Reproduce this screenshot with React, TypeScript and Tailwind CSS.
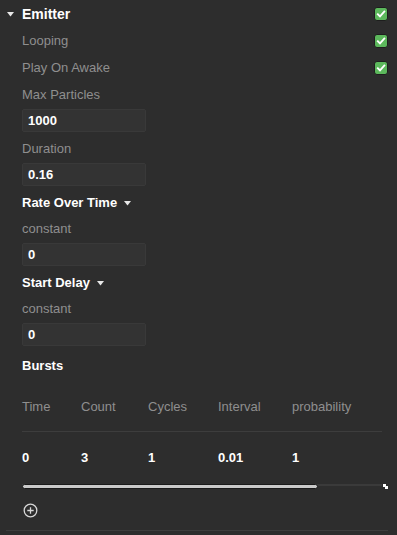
import React from 'react';

const Check = () => (
  <div className="w-[14px] h-[14px] rounded-[3px] bg-[#5cb85c] border border-[#1e1e1e] flex items-center justify-center">
    <svg width="10" height="10" viewBox="0 0 10 10">
      <path d="M1.8 5.2 L4 7.4 L8.3 2.6" fill="none" stroke="#fff" strokeWidth="1.8" strokeLinecap="square" />
    </svg>
  </div>
);

const Caret = ({ className }: { className?: string }) => (
  <svg width="7" height="5" viewBox="0 0 7 5" className={className}>
    <path d="M0 0 H7 L3.5 4.5 Z" fill="#e8e8e8" />
  </svg>
);

const Label = ({ text, h = 'h-[26px]' }: { text: string; h?: string }) => (
  <div className={`${h} flex items-center text-[13px] text-[#8f8f8f]`}>{text}</div>
);

const NumberInput = ({ value }: { value: string }) => (
  <div className="mt-px mb-1 h-[23px] w-[124px] rounded-[2px] bg-[#333333] border border-[#393939] flex items-center px-[5px] text-[13px] font-semibold text-white">
    {value}
  </div>
);

const Dropdown = ({ text }: { text: string }) => (
  <div className="h-[26px] flex items-center text-[13px] font-bold text-white">
    {text}
    <Caret className="ml-[7px] mt-px" />
  </div>
);

const columns = ['Time', 'Count', 'Cycles', 'Interval', 'probability'];
const values = ['0', '3', '1', '0.01', '1'];

export default function App() {
  return (
    <div
      className="w-[397px] h-[535px] bg-[#2d2d2d] overflow-hidden"
      style={{ fontFamily: '"Liberation Sans", Arial, sans-serif' }}
    >
      <div className="h-[28px] flex items-center pr-[9px]">
        <div className="w-[22px] flex justify-center pr-[2px]">
          <Caret />
        </div>
        <span className="flex-1 text-[14px] font-bold text-white">Emitter</span>
        <Check />
      </div>

      <div className="pl-[22px]">
        <div className="h-[26px] flex items-center justify-between pr-[9px]">
          <span className="text-[13px] text-[#8f8f8f]">Looping</span>
          <Check />
        </div>
        <div className="h-[28px] flex items-center justify-between pr-[9px]">
          <span className="text-[13px] text-[#8f8f8f]">Play On Awake</span>
          <Check />
        </div>
        <Label text="Max Particles" />
        <NumberInput value="1000" />
        <Label text="Duration" />
        <NumberInput value="0.16" />
        <Dropdown text="Rate Over Time" />
        <Label text="constant" />
        <NumberInput value="0" />
        <Dropdown text="Start Delay" />
        <Label text="constant" />
        <NumberInput value="0" />
        <div className="h-[31px] pt-px flex items-center text-[13px] font-bold text-white">Bursts</div>

        <div className="w-[360px]">
          <div className="h-[51px] pt-[2px] grid grid-cols-[59px_67px_70px_74px_1fr] items-center border-b border-[#3d3d3d] text-[13px] text-[#8f8f8f]">
            {columns.map((c) => (
              <span key={c}>{c}</span>
            ))}
          </div>
          <div className="h-[51px] pt-px grid grid-cols-[59px_67px_70px_74px_1fr] items-center text-[13px] font-semibold text-white">
            {values.map((v, i) => (
              <span key={i}>{v}</span>
            ))}
          </div>
          <div className="relative h-[6px] flex items-center">
            <div className="absolute left-0 right-0 top-[1px] h-[2px] bg-[#3a3a3a]" />
            <div className="relative w-[296px] h-[5px] rounded-full bg-[#c9c9c9] border border-[#1a1a1a]" />
            <div className="absolute right-[-6px] top-[1px] w-[5px] h-[5px]">
              <div className="absolute left-0 top-0 w-[3px] h-[3px] bg-white" />
              <div className="absolute right-0 bottom-0 w-[3px] h-[3px] bg-white" />
            </div>
          </div>
        </div>

        <div className="h-[41px] pt-px flex items-center">
          <svg width="15" height="15" viewBox="0 0 15 15" className="ml-px">
            <circle cx="7.5" cy="7.5" r="6.3" fill="none" stroke="#d8d8d8" strokeWidth="1.3" />
            <path d="M7.5 4.3 V10.7 M4.3 7.5 H10.7" stroke="#d8d8d8" strokeWidth="1.3" />
          </svg>
        </div>
      </div>
      <div className="ml-[6px] w-[382px] border-t border-[#3d3d3d]" />
    </div>
  );
}
